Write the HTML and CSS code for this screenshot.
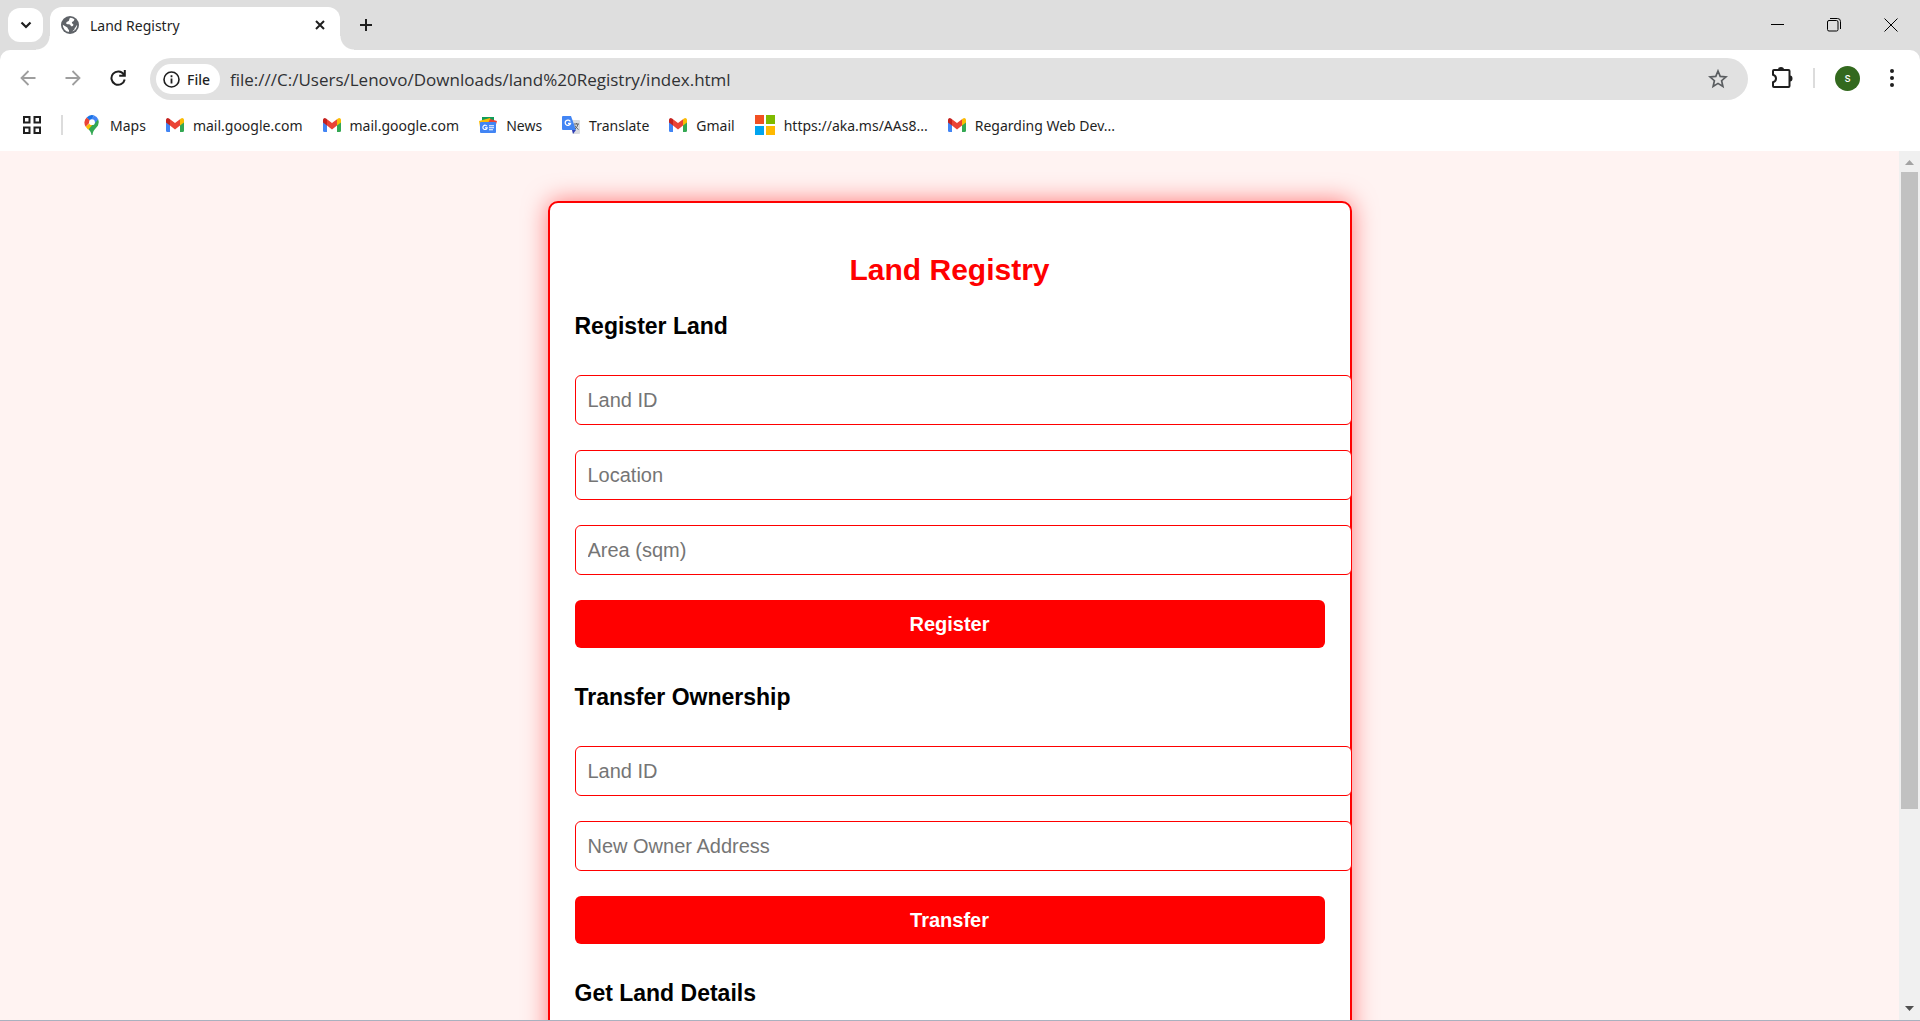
FILE: index.html
```html
<!DOCTYPE html>
<html lang="en">
<head>
<meta charset="utf-8">
<title>Land Registry</title>
<link rel="stylesheet" href="styles.css">
</head>
<body>
<svg class="defs" aria-hidden="true">
  <symbol id="gmail" viewBox="0 0 18 14">
    <path fill="#4285f4" d="M0 3v9.500Q0 14 1.300 14H4V6z"/>
    <path fill="#34a853" d="M14 6v8h2.700q1.300 0 1.300-1.500V3z"/>
    <path fill="#fbbc04" d="M14 1.200 15 .4q1.300-.8 2.400.1.600.6.600 1.500v2.500L14 7.600z"/>
    <path fill="#c5221f" d="M4 1.200 3 .4Q1.700-.4.600.5 0 1.100 0 2v2.500l4 3.100z"/>
    <path fill="#ea4335" d="M4 1.200 9 5l5-3.800v6.400L9 11.400 4 7.600z"/>
  </symbol>
</svg>

<header class="browser">
  <div class="tab-strip">
    <button class="tab-search" aria-label="Search tabs">
      <svg width="12" height="8" viewBox="0 0 12 8"><path d="M1.500 1.500 6 6l4.500-4.500" fill="none" stroke="#1f1f1f" stroke-width="2.200"/></svg>
    </button>
    <div class="tab">
      <svg width="18" height="18" viewBox="0 0 18 18"><circle cx="9" cy="9" r="9" fill="#5f6368"/><path d="M9.500 1.800C7.500 3 8.800 4 7.600 5 6.300 6 5.500 5.500 5.200 7c-.2 1.200 1 1.300 2.500 1.300 1.800 0 2 1 2.200 2 1.400.1 2.400-.3 2.500-1.500.1-1-1.400-.8-1.500-2C10.800 5.500 13 6 13.400 3.300A7.200 7.200 0 0 0 9.500 1.800zM1.800 8.800l4.500 2.600c.8.500.2 1.500 1.200 2 .8.400.5 1.500.3 2.700A7.200 7.200 0 0 1 1.800 8.800zM16.200 9c-.2 3.500-2 5.500-4.700 6.500.5-1.500 2.500-1.500 2.200-3.500 1.200-.6 1-2 2.500-3z" fill="#fff"/></svg>
      <span class="tab-title">Land Registry</span>
      <button class="plain" aria-label="Close tab">
        <svg width="10" height="10" viewBox="0 0 10 10"><path d="m1 1 8 8M9 1 1 9" stroke="#1f1f1f" stroke-width="2"/></svg>
      </button>
    </div>
    <button class="plain new-tab" aria-label="New tab">
      <svg width="14" height="14" viewBox="0 0 14 14"><path d="M7 1v12M1 7h12" stroke="#1f1f1f" stroke-width="2"/></svg>
    </button>
    <div class="window-buttons">
      <button class="plain" aria-label="Minimize"><svg width="14" height="14" viewBox="0 0 14 14"><path d="M1 6.500h13" stroke="#000"/></svg></button>
      <button class="plain" aria-label="Restore"><svg width="14" height="14" viewBox="0 0 14 14" fill="none" stroke="#000"><rect x=".5" y="2.500" width="10.500" height="10.500" rx="1.500"/><path d="M3 .5h7.500q3 0 3 3V11"/></svg></button>
      <button class="plain" aria-label="Close"><svg width="14" height="14" viewBox="0 0 14 14"><path d="m.5.5 13 13m0-13-13 13" stroke="#000"/></svg></button>
    </div>
  </div>

  <div class="toolbar">
    <nav class="history">
      <button class="plain" aria-label="Back"><svg width="16" height="16" viewBox="0 0 16 16" fill="none" stroke="#9e9e9e" stroke-width="1.800"><path d="M15.500 8H2M8.500 1 1.500 8l7 7"/></svg></button>
      <button class="plain" aria-label="Forward"><svg width="16" height="16" viewBox="0 0 16 16" fill="none" stroke="#9e9e9e" stroke-width="1.800"><path d="M.5 8H14M7.500 1l7 7-7 7"/></svg></button>
      <button class="plain" aria-label="Reload"><svg width="16" height="16" viewBox="0 0 16 16" fill="none" stroke="#1f1f1f" stroke-width="2"><path d="M13.800 4.500A6.700 6.700 0 1 0 14.700 9.500M14.800 0v5.800H9.200"/></svg></button>
    </nav>
    <div class="address">
      <button class="chip">
        <svg width="17" height="17" viewBox="0 0 17 17"><circle cx="8.500" cy="8.500" r="7.500" fill="none" stroke="#1f1f1f" stroke-width="1.600"/><path d="M8.500 7.500v5M8.500 4.300v1.900" stroke="#1f1f1f" stroke-width="1.800"/></svg>
        File
      </button>
      <input class="url" type="text" aria-label="Address" value="file:///C:/Users/Lenovo/Downloads/land%20Registry/index.html">
      <button class="plain" aria-label="Bookmark this page"><svg width="20" height="20" viewBox="0 0 20 20"><path d="m10 2 2.200 5.400 5.800.5-4.400 3.800 1.300 5.700L10 14.400l-4.900 3 1.300-5.700L2 7.900l5.800-.5z" fill="none" stroke="#5a5d60" stroke-width="1.700"/></svg></button>
    </div>
    <div class="actions">
      <button class="plain" aria-label="Extensions"><svg width="22" height="22" viewBox="0 0 22 22"><path d="M3 3h14.500q1 0 1 1v15q0 1-1 1H3q-1 0-1-1v-3.800c4-1 4-6.400 0-7.400V4q0-1 1-1z" fill="none" stroke="#1f1f1f" stroke-width="2"/><path d="M7 2.500a3 2.500 0 0 1 6 0zM19 8.500a2.500 3 0 0 1 0 6z" fill="#1f1f1f"/></svg></button>
      <span class="divider"></span>
      <button class="avatar" aria-label="Profile">s</button>
      <button class="plain" aria-label="Menu"><svg width="4" height="18" viewBox="0 0 4 18" fill="#1f1f1f"><circle cx="2" cy="2" r="2"/><circle cx="2" cy="9" r="2"/><circle cx="2" cy="16" r="2"/></svg></button>
    </div>
  </div>

  <nav class="bookmarks">
    <button class="plain" aria-label="Apps"><svg width="18" height="18" viewBox="0 0 18 18" fill="none" stroke="#1f1f1f" stroke-width="2"><path d="M1 1h5.500v5.500H1zM11.500 1H17v5.500h-5.500zM1 11.500h5.500V17H1zM11.500 11.500H17V17h-5.500z"/></svg></button>
    <span class="divider"></span>
    <a class="bookmark" href="#"><svg width="18" height="20" viewBox="-1 0 18 20"><path fill="#34a853" d="M14.200 4.200A7 7 0 0 1 14 10.500C12 13.500 9 15 8.500 20h-1C7.300 17 5.500 15.500 3.500 13z"/><path fill="#fbbc04" d="m5.300 8.500-3.600 3.300 2.500 3L10 8z"/><path fill="#ea4335" d="M2.700 2.600A7 7 0 0 0 1.700 11.800L7 6z"/><path fill="#1a73e8" d="M10.200.4A7 7 0 0 0 2.700 2.600L6.500 6z"/><path fill="#4285f4" d="M10.200.4a7 7 0 0 1 4 3.800L9.500 10 6 6z"/><circle cx="8" cy="7.200" r="2.900" fill="#fff"/></svg>Maps</a>
    <a class="bookmark" href="#"><svg width="18" height="14"><use href="#gmail"/></svg>mail.google.com</a>
    <a class="bookmark" href="#"><svg width="18" height="14"><use href="#gmail"/></svg>mail.google.com</a>
    <a class="bookmark" href="#"><svg width="18" height="16" viewBox="0 0 18 16"><path fill="#0f9d58" d="M3 0h12v8H3z"/><path fill="#fbbc04" d="m0 4 11-3 2 6-12 3z"/><path fill="#ea4335" d="m11 2 7 2-2 7-8-3z"/><rect x="1" y="5" width="16" height="11" rx="1" fill="#4285f4"/><path d="M8 9.300a2.200 2.200 0 1 0 .2 1.600H6M10 8.800h5M10 10.800h5M10 12.800h4" fill="none" stroke="#fff" stroke-width="1.100"/></svg>News</a>
    <a class="bookmark" href="#"><svg width="18" height="18" viewBox="0 0 18 18"><path fill="#dadce0" d="M7 4h10q1 0 1 1v12q0 1-1 1h-6z"/><path fill="#3040b5" d="M10 14h4l-3 4z"/><path fill="#4285f4" d="M1 0h8l5 14H1q-1 0-1-1V1q0-1 1-1z"/><path d="M8.300 5.500A2.700 2.700 0 1 0 8.500 7.500H6" fill="none" stroke="#fff" stroke-width="1.300"/><path d="M12 8h5M14.500 7v1M16 8q-.5 3-3 5M13 9.500q1.500 3 3.500 4" fill="none" stroke="#5f6368"/></svg>Translate</a>
    <a class="bookmark" href="#"><svg width="18" height="14"><use href="#gmail"/></svg>Gmail</a>
    <a class="bookmark" href="#"><svg width="20" height="20" viewBox="0 0 20 20"><path fill="#f25022" d="M0 0h9v9H0z"/><path fill="#7fba00" d="M11 0h9v9h-9z"/><path fill="#00a4ef" d="M0 11h9v9H0z"/><path fill="#ffb900" d="M11 11h9v9h-9z"/></svg>https://aka.ms/AAs8...</a>
    <a class="bookmark" href="#"><svg width="18" height="14"><use href="#gmail"/></svg>Regarding Web Dev...</a>
  </nav>
</header>

<div class="viewport">
  <main class="page">
    <div class="card">
      <h1>Land Registry</h1>
      <form class="first">
        <h2>Register Land</h2>
        <input type="text" placeholder="Land ID" aria-label="Land ID">
        <input type="text" placeholder="Location" aria-label="Location">
        <input type="text" placeholder="Area (sqm)" aria-label="Area (sqm)">
        <button type="button">Register</button>
      </form>
      <form>
        <h2>Transfer Ownership</h2>
        <input type="text" placeholder="Land ID" aria-label="Land ID">
        <input type="text" placeholder="New Owner Address" aria-label="New Owner Address">
        <button type="button">Transfer</button>
      </form>
      <form>
        <h2>Get Land Details</h2>
      </form>
    </div>
  </main>
  <div class="scrollbar" aria-hidden="true">
    <svg width="9" height="5" viewBox="0 0 9 5"><path d="M4.500 0 9 5H0z" fill="#a3a3a3"/></svg>
    <div class="track"><div class="thumb"></div></div>
    <svg width="9" height="5" viewBox="0 0 9 5"><path d="M4.500 5 9 0H0z" fill="#505050"/></svg>
  </div>
</div>
</body>
</html>
```
FILE: styles.css
```css
* { box-sizing: border-box; }

body {
  margin: 0;
  height: 100vh;
  display: flex;
  flex-direction: column;
  overflow: hidden;
  border-bottom: 1px solid #a9b1bf;
  background: #fff;
  font-family: Arial, "Liberation Sans", sans-serif;
}

.defs { display: none; }
svg { display: block; flex: none; }

/* Browser frame */
.browser {
  flex: none;
  background: #dedede;
  color: #1f1f1f;
  font-family: "Segoe UI", "Noto Sans", "Open Sans", sans-serif;
}

.plain {
  display: flex;
  padding: 0;
  border: 0;
  background: none;
}

.tab-strip {
  display: flex;
  align-items: center;
  height: 50px;
  padding: 0 7px 0 8px;
}

.tab-search {
  display: grid;
  place-items: center;
  width: 35px;
  height: 34px;
  margin-right: 7px;
  padding: 0;
  border: 0;
  border-radius: 12px;
  background: #fff;
}

.tab {
  position: relative;
  display: flex;
  align-items: center;
  align-self: flex-end;
  gap: 11px;
  width: 290px;
  height: 43px;
  padding: 0 15px 7px 11px;
  border-radius: 12px 12px 0 0;
  background: #fff;
  font-size: 14px;
}

.tab::before,
.tab::after {
  content: "";
  position: absolute;
  bottom: 0;
  width: 14px;
  height: 14px;
}

.tab::before {
  right: 100%;
  background: radial-gradient(circle at 0 0, transparent 13px, #fff 14px);
}

.tab::after {
  left: 100%;
  background: radial-gradient(circle at 100% 0, transparent 13px, #fff 14px);
}

.tab-title { flex: 1; }
.new-tab { margin-left: 19px; }

.window-buttons {
  display: flex;
  gap: 43px;
  margin-left: auto;
  padding-right: 15px;
}

.toolbar {
  display: flex;
  align-items: center;
  height: 58px;
  padding: 0 26px 2px 20px;
  border-radius: 10px 10px 0 0;
  background: #fff;
}

.history {
  display: flex;
  gap: 29px;
  width: 130px;
}

.address {
  flex: 1;
  display: flex;
  align-items: center;
  height: 42px;
  margin-top: 2px;
  padding: 0 20px 0 6px;
  border-radius: 21px;
  background: #e1e1e1;
}

.chip {
  display: flex;
  align-items: center;
  gap: 7px;
  width: 64px;
  height: 30px;
  padding: 0 0 0 7px;
  border: 0;
  border-radius: 15px;
  background: #fff;
  color: #1f1f1f;
  font: 500 14px "Segoe UI", "Noto Sans", "Open Sans", sans-serif;
}

.url {
  flex: 1;
  margin-left: 10px;
  padding: 0;
  border: 0;
  outline: 0;
  background: none;
  color: #303134;
  font: 17px "Segoe UI", "Open Sans", sans-serif;
}

.actions {
  display: flex;
  align-items: center;
  gap: 20px;
  margin-left: 23px;
}

.divider {
  width: 2px;
  height: 20px;
  background: #dcdcdc;
}

.avatar {
  width: 25px;
  height: 25px;
  margin-right: 10px;
  padding: 0;
  border: 0;
  border-radius: 50%;
  background: #33691e;
  color: #fff;
  font: 12px Roboto, sans-serif;
}

.bookmarks {
  display: flex;
  align-items: center;
  gap: 20px;
  height: 43px;
  padding: 0 23px 9px;
  background: #fff;
}

.bookmark {
  display: flex;
  align-items: center;
  gap: 9px;
  color: #1f1f1f;
  font-size: 14px;
  text-decoration: none;
  white-space: nowrap;
}

/* Page */
.viewport {
  flex: 1;
  min-height: 0;
  display: flex;
}

.page {
  flex: 1;
  overflow: hidden;
  padding: 50px 25px;
  background: #fff3f2;
}

.card {
  max-width: 804px;
  margin: 0 auto;
  padding: 50px 25px;
  border: 2px solid #f00;
  border-radius: 10px;
  background: #fff;
  box-shadow: 0 0 25px rgba(255, 0, 0, 0.5);
}

h1 {
  margin: 0 0 26px;
  color: #f00;
  font-size: 30px;
  line-height: 34px;
  text-align: center;
}

form {
  display: flex;
  flex-direction: column;
  gap: 25px;
  margin-top: 36px;
}

.first { margin-top: 0; }

h2 {
  margin: 0 0 11px;
  font-size: 23px;
  line-height: 26px;
}

.card input {
  box-sizing: content-box;
  width: 100%;
  height: 24px;
  padding: 12px 13px 12px 12px;
  border: 1px solid #f00;
  border-radius: 6px;
  background: #fff;
  font: 20px Arial, "Liberation Sans", sans-serif;
}

.card input::placeholder { color: #757575; }

.card button {
  height: 48px;
  border: 0;
  border-radius: 6px;
  background: #f00;
  color: #fff;
  font: bold 20px Arial, "Liberation Sans", sans-serif;
}

/* Scrollbar */
.scrollbar {
  display: flex;
  flex-direction: column;
  align-items: center;
  gap: 7px;
  width: 21px;
  padding: 9px 2px;
  background: #f0f0f0;
}

.track {
  flex: 1;
  width: 17px;
}

.thumb {
  height: 77%;
  background: #c1c1c1;
}
```
